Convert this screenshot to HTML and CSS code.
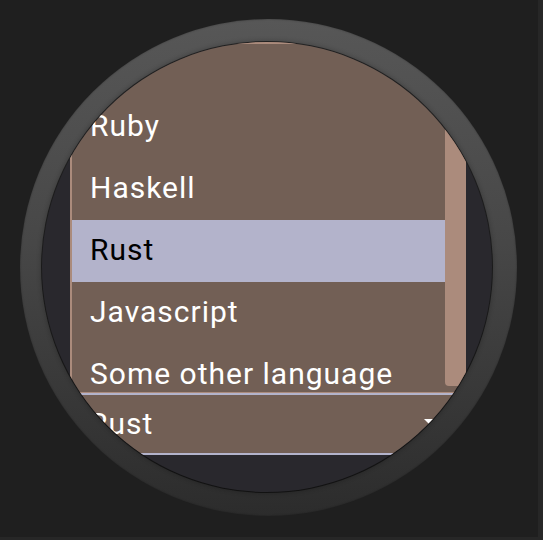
FILE: index.html
```html
<!DOCTYPE html>
<html lang="en">
<head>
<meta charset="utf-8">
<title>Wear select</title>
<link rel="stylesheet" href="styles.css">
</head>
<body>
<div class="stage">
  <div class="watch">
    <div class="screen">
      <div class="column">
        <div class="menu">
          <ul class="options">
            <li class="option">Ruby</li>
            <li class="option">Haskell</li>
            <li class="option selected">Rust</li>
            <li class="option">Javascript</li>
            <li class="option">Some other language</li>
          </ul>
          <div class="scrollbar"><div class="thumb"></div></div>
        </div>
        <div class="select">
          <span class="value">Rust</span>
          <span class="arrow"></span>
        </div>
      </div>
    </div>
  </div>
</div>
</body>
</html>
```

FILE: styles.css
```css
html, body {
  margin: 0;
  padding: 0;
  background: #272727;
}

.stage {
  width: 538px;
  height: 537px;
  background: #1f1f1f;
  box-sizing: border-box;
  padding: 19px 0 0 20px;
}

.watch {
  width: 497px;
  height: 497px;
  box-sizing: border-box;
  border-radius: 50%;
  padding: 23px 0 0 22px;
  background: linear-gradient(to bottom, #575757 0%, #474747 45%, #2c2c2c 100%);
  box-shadow: inset 0 0 2px rgba(0, 0, 0, 0.35);
}

.screen {
  width: 450px;
  height: 450px;
  border-radius: 50%;
  overflow: hidden;
  background: #29282d;
  box-shadow: 0 0 0 1px rgba(0, 0, 0, 0.55), 0 0 4px 2px rgba(0, 0, 0, 0.18);
}

.column {
  width: 396px;
  margin-left: 28px;
  display: flex;
  flex-direction: column;
  font-family: Roboto, "Noto Sans", sans-serif;
  font-size: 30px;
  letter-spacing: 1px;
}

.menu {
  height: 351px;
  box-sizing: border-box;
  border: 2px solid #ab8b7c;
  border-bottom-width: 1px;
  background: #725f55;
  display: flex;
  overflow: hidden;
}

.options {
  flex: 1;
  list-style: none;
  margin: 0;
  padding: 52px 0 0;
  overflow: hidden;
}

.option {
  height: 62px;
  box-sizing: border-box;
  flex-shrink: 0;
  display: flex;
  align-items: center;
  padding: 0 0 3px 18px;
  color: #ffffff;
  white-space: nowrap;
}

.option.selected {
  background: #b3b3cb;
  color: #000000;
}

.scrollbar {
  width: 19px;
  flex-shrink: 0;
}

.thumb {
  height: 342px;
  background: #ab8b7c;
  border-radius: 0 0 4px 4px;
}

.select {
  height: 62px;
  box-sizing: border-box;
  border-top: 2px solid #b3b3cb;
  border-bottom: 2px solid #b3b3cb;
  background: #725f55;
  display: flex;
  align-items: center;
  justify-content: space-between;
  padding: 0 32px 2px 19px;
  color: #ffffff;
}

.arrow {
  width: 0;
  height: 0;
  border-left: 5px solid transparent;
  border-right: 5px solid transparent;
  border-top: 5px solid #ffffff;
  margin-top: -4px;
}
```
